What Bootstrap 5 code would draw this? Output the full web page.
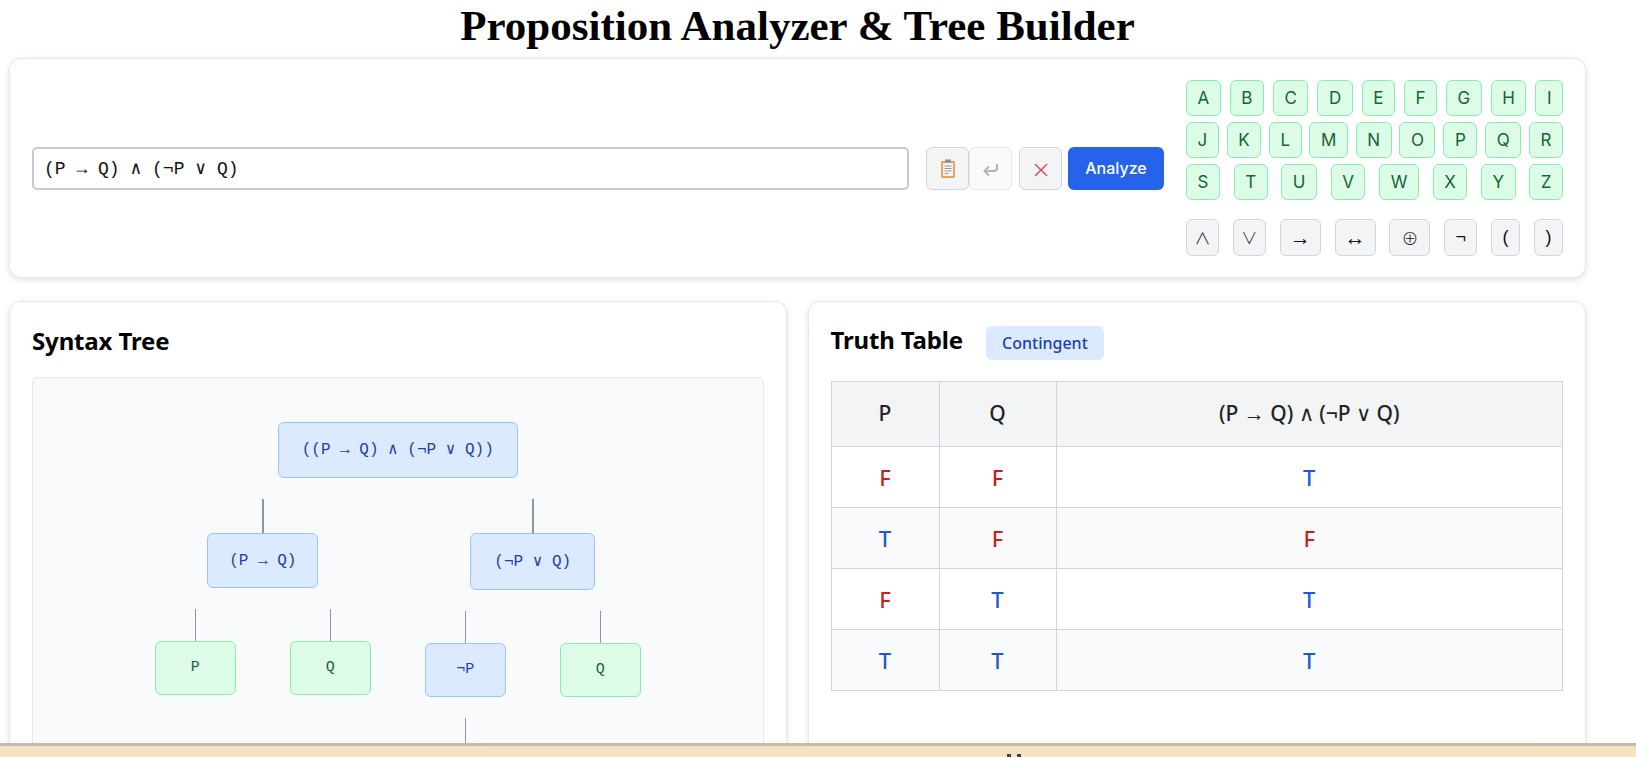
<!DOCTYPE html>
<html lang="en">
<head>
  <meta charset="UTF-8" />
  <meta name="viewport" content="width=device-width, initial-scale=1.0"/>
  <title>Proposition Analyzer &amp; Tree Builder</title>
  <link href="https://cdn.jsdelivr.net/npm/bootstrap@5.3.0/dist/css/bootstrap.min.css" rel="stylesheet" />
  <style>
    html, body { height: 757px; overflow: hidden; background: #fff; }
    body { font-family: "Noto Sans", sans-serif; color: #000; }

    .page-wrap { padding: 0 50px 0 9px; }
    .page-title {
      font-family: "Liberation Serif", serif;
      font-weight: 700;
      font-size: 43px;
      line-height: 50px;
      margin: 0;
      height: 58px;
      padding-top: 1px;
    }

    .panel {
      background: #fff;
      border: 1px solid #e5e7eb;
      border-radius: 12px;
      box-shadow: 0 2px 6px rgba(0, 0, 0, .12);
    }
    .input-panel { height: 220px; padding: 0 22px; gap: 22px; }

    .formula-input {
      font-family: "Liberation Mono", monospace;
      font-size: 18px;
      height: 43px;
      border: 2px solid #c9cacc;
      border-radius: 5px;
      padding: 0 10px;
      color: #111;
      flex: 1 1 auto;
      min-width: 0;
    }
    .formula-input:focus { border-color: #c9cacc; box-shadow: none; }

    .tool-group { flex: none; margin-left: -5px; }
    .tool-btn {
      width: 43px;
      height: 43px;
      padding: 0;
      background: #f3f4f6;
      border: 1px solid #d1d5db;
      border-radius: 6px;
    }
    .tool-btn.is-off { background: #f9fafb; border-color: #e5e7eb; margin-right: 7px; }
    .tool-btn.is-clear { margin-right: 6px; }
    .analyze-btn {
      font-family: Inter, sans-serif;
      font-weight: 500;
      font-size: 16px;
      width: 96px;
      height: 43px;
      padding: 0;
      color: #fff;
      background: #2563eb;
      border: 0;
      border-radius: 6px;
    }

    .keypad { width: 377px; flex: none; }
    .key-row { display: flex; justify-content: space-between; margin-bottom: 6px; }
    .key-row.ops { margin: 19px 0 0; }
    .key {
      font-family: Inter, sans-serif;
      font-size: 17px;
      line-height: 34px;
      padding: 0 10.500px;
      border-radius: 6px;
      color: #166534;
      background: #dcfce7;
      border: 1px solid #86efac;
      text-align: center;
    }
    .key.op {
      font-family: "Liberation Sans", "DejaVu Sans", sans-serif;
      font-size: 18px;
      color: #111;
      background: #f3f4f6;
      border-color: #d1d5db;
      line-height: 35px;
    }
    .key.op-wide { padding: 0; width: 41px; }
    .key.op-mid { padding: 0; width: 33px; }
    .key.op-thin { padding: 0; width: 29px; }
    .key.op-logic { font-family: "Noto Sans CJK JP", "Liberation Sans", sans-serif; font-weight: 300; font-size: 16px; }
    .key.op-arrow { font-size: 21px; }
    .key.op-xor { font-family: "Noto Sans CJK JP", "Liberation Sans", sans-serif; font-weight: 300; font-size: 17px; }

    .panels-row { --bs-gutter-x: 22px; margin-top: 23px; }
    .panels-row > .col-left { padding-right: 11px; }
    .panels-row > .col-right { padding-left: 10px; }
    .tree-panel, .table-panel { height: 600px; padding: 22px; }
    .panel-title { font-size: 24px; font-weight: 700; line-height: 33px; margin: 0; letter-spacing: -.15px; }

    .tree-box {
      margin-top: 20px;
      padding-top: 44px;
      height: 600px;
      background: #f9fafb;
      border: 1px solid #e5e7eb;
      border-radius: 6px;
    }
    .subtree { display: flex; flex-direction: column; align-items: center; }
    .branches { display: flex; justify-content: center; gap: 54px; }
    .link { width: 1px; height: 32px; margin-top: 21px; background: #8d95a6; }
    .link.thick { width: 2px; height: 34px; }
    .tree-node {
      font-family: "Liberation Mono", monospace;
      font-size: 16px;
      height: 56px;
      padding: 0 23px;
      display: flex;
      align-items: center;
      justify-content: center;
      border: 1px solid #93c5fd;
      border-radius: 6px;
      background: #dbeafe;
      color: #1e40af;
    }
    .tree-node.mid { height: 55px; }
    .tree-node.narrow { padding: 0 21px; }
    .tree-node.tall { height: 57px; }
    .tree-node.small { font-size: 15px; width: 81px; height: 54px; padding: 0; }
    .tree-node.leaf { background: #dcfce7; border-color: #86efac; color: #166534; }

    .status-pill {
      font-size: 16px;
      font-weight: 500;
      line-height: 34px;
      padding: 0 16px;
      margin-left: 23px;
      margin-top: 5px;
      border-radius: 6px;
      background: #dbeafe;
      color: #1e40af;
    }
    .title-row { margin-top: -3px; }
    .title-row .panel-title { margin-top: 2px; }
    .truth-table {
      margin: 21px 0 0;
      --bs-table-bg: transparent;
      border-color: #d1d5db;
      table-layout: fixed;
    }
    .truth-table th, .truth-table td { text-align: center; vertical-align: middle; padding: 0; }
    .truth-table th { height: 65px; font-size: 21px; font-weight: 500; background: #f3f4f6; }
    .truth-table td { height: 61px; font-size: 22px; font-weight: 500; }
    .truth-table tbody tr:nth-child(even) td { background: #f9fafb; }
    .col-p { width: 108px; }
    .col-q { width: 117px; }
    .truth-table .val-t { color: #2059d6; }
    .truth-table .val-f { color: #c81e1e; }

    .host-bar {
      position: fixed;
      left: 0;
      right: 0;
      bottom: 0;
      height: 14px;
      overflow: hidden;
      border-top: 3px solid #c3bcae;
      background: linear-gradient(90deg, #f3e1c4 0%, #f6e3c2 100%);
    }
    .host-mark { position: absolute; left: 1007px; bottom: 0; display: block; }
  </style>
</head>
<body>
  <div class="page-wrap">
    <h1 class="page-title text-center">Proposition Analyzer &amp; Tree Builder</h1>

    <section class="panel input-panel d-flex align-items-center">
      <input type="text" class="form-control formula-input" value="(P → Q) ∧ (¬P ∨ Q)" aria-label="Formula">
      <div class="tool-group d-flex align-items-center">
        <button class="btn tool-btn" aria-label="Paste">
          <svg width="18" height="22" viewBox="0 0 18 22">
            <rect x="2" y="3" width="14" height="17" fill="#e9a35f" rx="1"/>
            <rect x="4" y="5" width="10" height="13" fill="#f4f4f6"/>
            <rect x="6" y="1.500" width="6" height="3" fill="#8f8f95"/>
            <path d="M5.500 8h7M5.500 10.500h7M5.500 13h7M5.500 15.500h4" stroke="#9a9aa3" stroke-width="1"/>
          </svg>
        </button>
        <button class="btn tool-btn is-off" aria-label="Undo">
          <svg width="18" height="16" viewBox="0 0 18 16" fill="none" stroke="#b4b4b8" stroke-width="2">
            <path d="M15 2v4a3 3 0 0 1-3 3H3"/><path d="M7 4.500 2.500 9 7 13.500"/>
          </svg>
        </button>
        <button class="btn tool-btn is-clear" aria-label="Clear">
          <svg width="16" height="16" viewBox="0 0 16 16" stroke="#e0404f" stroke-width="1.400">
            <path d="M2 2l12 12M14 2 2 14"/>
          </svg>
        </button>
        <button class="btn analyze-btn">Analyze</button>
      </div>
      <div class="keypad">
        <div class="key-row">
          <span class="key">A</span><span class="key">B</span><span class="key">C</span><span class="key">D</span><span class="key">E</span><span class="key">F</span><span class="key">G</span><span class="key">H</span><span class="key">I</span>
        </div>
        <div class="key-row">
          <span class="key">J</span><span class="key">K</span><span class="key">L</span><span class="key">M</span><span class="key">N</span><span class="key">O</span><span class="key">P</span><span class="key">Q</span><span class="key">R</span>
        </div>
        <div class="key-row">
          <span class="key">S</span><span class="key">T</span><span class="key">U</span><span class="key">V</span><span class="key">W</span><span class="key">X</span><span class="key">Y</span><span class="key">Z</span>
        </div>
        <div class="key-row ops">
          <span class="key op op-mid op-logic">∧</span><span class="key op op-mid op-logic">∨</span><span class="key op op-wide op-arrow">→</span><span class="key op op-wide op-arrow">↔</span><span class="key op op-wide op-xor">⊕</span><span class="key op op-mid">¬</span><span class="key op op-thin">(</span><span class="key op op-thin">)</span>
        </div>
      </div>
    </section>

    <div class="row panels-row">
      <div class="col-6 col-left">
        <section class="panel tree-panel">
          <h2 class="panel-title">Syntax Tree</h2>
          <div class="tree-box">
            <div class="subtree">
              <div class="tree-node">((P → Q) ∧ (¬P ∨ Q))</div>
              <div class="branches">
                <div class="subtree">
                  <div class="link thick"></div>
                  <div class="tree-node mid narrow">(P → Q)</div>
                  <div class="branches">
                    <div class="subtree">
                      <div class="link"></div>
                      <div class="tree-node small leaf">P</div>
                    </div>
                    <div class="subtree">
                      <div class="link"></div>
                      <div class="tree-node small leaf">Q</div>
                    </div>
                  </div>
                </div>
                <div class="subtree">
                  <div class="link thick"></div>
                  <div class="tree-node tall">(¬P ∨ Q)</div>
                  <div class="branches">
                    <div class="subtree">
                      <div class="link"></div>
                      <div class="tree-node small">¬P</div>
                      <div class="link"></div>
                    </div>
                    <div class="subtree">
                      <div class="link"></div>
                      <div class="tree-node small leaf">Q</div>
                    </div>
                  </div>
                </div>
              </div>
            </div>
          </div>
        </section>
      </div>
      <div class="col-6 col-right">
        <section class="panel table-panel">
          <div class="title-row d-flex align-items-start">
            <h2 class="panel-title">Truth Table</h2>
            <span class="status-pill">Contingent</span>
          </div>
          <table class="table table-bordered truth-table">
            <thead>
              <tr><th class="col-p">P</th><th class="col-q">Q</th><th>(P → Q) ∧ (¬P ∨ Q)</th></tr>
            </thead>
            <tbody>
              <tr><td class="val-f">F</td><td class="val-f">F</td><td class="val-t">T</td></tr>
              <tr><td class="val-t">T</td><td class="val-f">F</td><td class="val-f">F</td></tr>
              <tr><td class="val-f">F</td><td class="val-t">T</td><td class="val-t">T</td></tr>
              <tr><td class="val-t">T</td><td class="val-t">T</td><td class="val-t">T</td></tr>
            </tbody>
          </table>
        </section>
      </div>
    </div>
  </div>

  <div class="host-bar">
    <svg class="host-mark" width="16" height="3" viewBox="0 0 16 3" fill="#444"><rect x="0" y="0" width="4" height="3"/><rect x="10" y="0" width="4" height="3"/></svg>
  </div>
</body>
</html>
